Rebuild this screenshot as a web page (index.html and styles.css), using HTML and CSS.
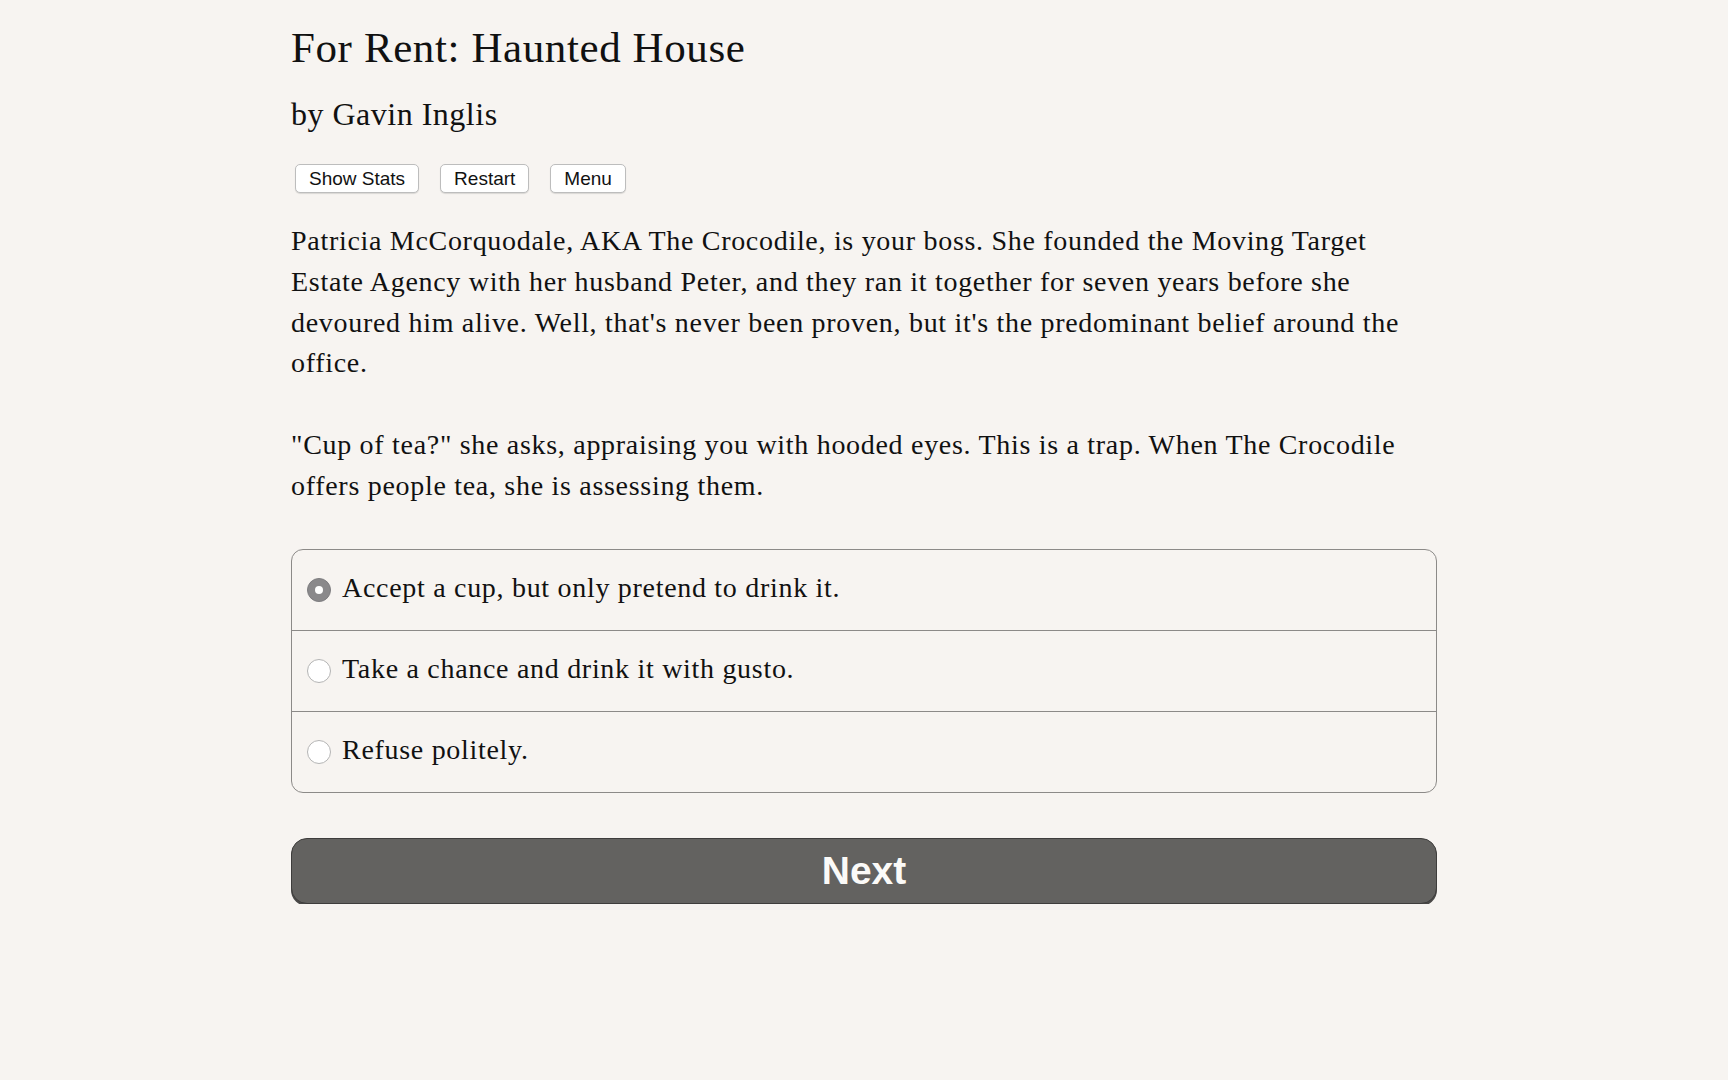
FILE: index.html
```html
<!DOCTYPE html>
<html>
<head>
<meta charset="utf-8">
<title>For Rent: Haunted House</title>
<link rel="stylesheet" href="styles.css">
</head>
<body>
<div class="container">
  <h1 class="title">For Rent: Haunted House</h1>
  <h2 class="byline">by Gavin Inglis</h2>
  <div class="buttons">
    <button class="btn">Show Stats</button>
    <button class="btn">Restart</button>
    <button class="btn">Menu</button>
  </div>
  <div class="text">
    <p>Patricia McCorquodale, AKA The Crocodile, is your boss. She founded the Moving Target Estate Agency with her husband Peter, and they ran it together for seven years before she devoured him alive. Well, that's never been proven, but it's the predominant belief around the office.</p>
    <p>"Cup of tea?" she asks, appraising you with hooded eyes. This is a trap. When The Crocodile offers people tea, she is assessing them.</p>
  </div>
  <div class="choices">
    <label class="choice"><span class="radio checked"></span><span class="label">Accept a cup, but only pretend to drink it.</span></label>
    <label class="choice"><span class="radio"></span><span class="label">Take a chance and drink it with gusto.</span></label>
    <label class="choice"><span class="radio"></span><span class="label">Refuse politely.</span></label>
  </div>
  <button class="next">Next</button>
</div>
</body>
</html>
```
FILE: styles.css
```css
html, body {
  margin: 0;
  padding: 0;
  background: #f7f4f1;
}
body {
  font-family: "Liberation Serif", "Times New Roman", serif;
  color: #111;
}
.container {
  width: 1146px;
  margin: 0 auto;
  padding-top: 22px;
}
.title {
  margin: 0;
  font-size: 43px;
  line-height: 52px;
  font-weight: normal;
  letter-spacing: 0.6px;
}
.byline {
  margin: 20px 0 0;
  font-size: 32px;
  line-height: 40px;
  font-weight: normal;
  letter-spacing: 0.5px;
}
.buttons {
  display: flex;
  gap: 21px;
  margin-top: 30px;
  padding-left: 4px;
}
.btn {
  font-family: "Liberation Sans", Arial, sans-serif;
  font-size: 19px;
  height: 29px;
  padding: 0 13px;
  background: #fff;
  border: 1px solid #bdbdbd;
  border-radius: 5px;
  box-shadow: 0 1px 1px rgba(0,0,0,0.12);
  color: #111;
}
.text {
  margin-top: 28px;
  font-size: 28px;
  line-height: 40.8px;
  letter-spacing: 0.7px;
}
.text p {
  margin: 0 0 40.8px;
}
.text p:last-child {
  margin-bottom: 0;
}
.choices {
  margin-top: 42px;
  border: 1.5px solid #8c8a88;
  border-radius: 12px;
  overflow: hidden;
}
.choice {
  display: flex;
  align-items: center;
  height: 80px;
  padding-left: 15px;
  font-size: 28px;
  letter-spacing: 0.7px;
}
.choice + .choice {
  border-top: 1.5px solid #8c8a88;
}
.radio {
  width: 24px;
  height: 24px;
  border-radius: 50%;
  border: 1px solid #b4b4b4;
  background: #fff;
  box-sizing: border-box;
  flex: none;
  margin-right: 11px;
  position: relative;
}
.radio.checked {
  background: #8a898b;
  border-color: #7e7d80;
}
.radio.checked::after {
  content: "";
  position: absolute;
  left: 50%;
  top: 50%;
  width: 8px;
  height: 8px;
  margin: -4px 0 0 -4px;
  border-radius: 50%;
  background: #fff;
}
.label {
  padding-bottom: 4px;
}
.next {
  display: block;
  width: 100%;
  margin-top: 45px;
  height: 66px;
  background: #636260;
  border: 1.5px solid #3e3d3c;
  border-radius: 16px;
  box-shadow: 0 2px 0 #4a4948;
  color: #fbfaf8;
  font-family: "Liberation Sans", Arial, sans-serif;
  font-weight: bold;
  font-size: 39px;
}
```
